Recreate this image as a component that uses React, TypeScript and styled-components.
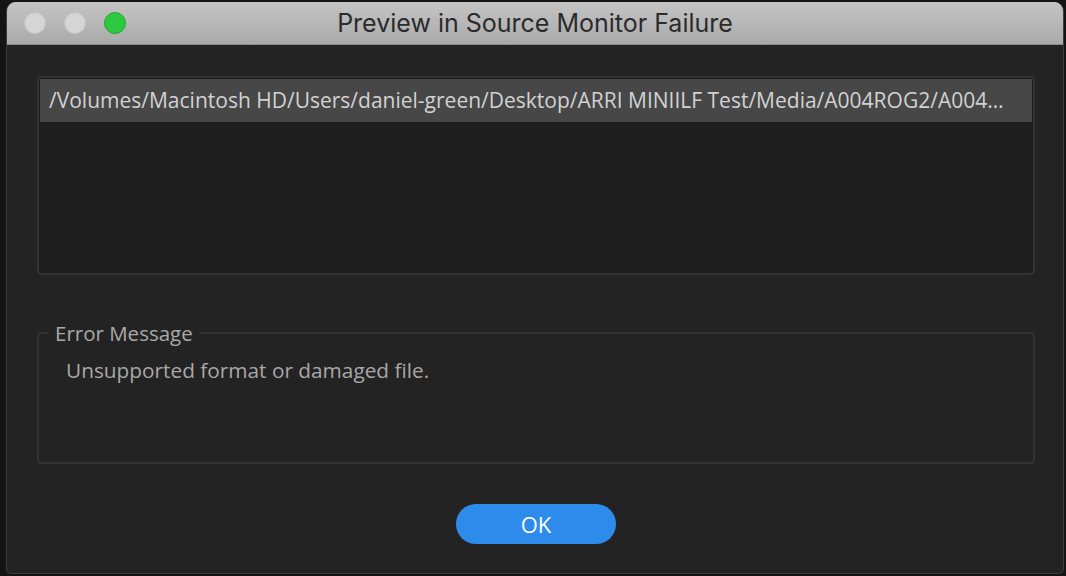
import styled, { createGlobalStyle } from "styled-components";

const Global = createGlobalStyle`
    html, body {
        margin: 0;
        padding: 0;
        background-color: #141414;
        width: 1066px;
        height: 576px;
        overflow: hidden;
    }
`

const Janela = styled.div`
    margin: 2px 0 0 6px;
    width: 1058px;
    height: 572px;
    box-sizing: border-box;
    border: 1px solid #3c3c3c;
    border-top: none;
    border-radius: 9px 9px 5px 5px;
    background-color: #232323;
    display: flex;
    flex-direction: column;
    overflow: hidden;
`

const BarraTitulo = styled.div`
    height: 43px;
    flex-shrink: 0;
    box-sizing: border-box;
    background: linear-gradient(#c4c4c4, #aaaaaa);
    border-bottom: 1px solid #8e8e8e;
    display: flex;
    align-items: center;
    position: relative;
`

const Semaforos = styled.div`
    display: flex;
    gap: 18px;
    padding-left: 17px;
`

const Luz = styled.span<{ cor: string; borda: string }>`
    width: 22px;
    height: 22px;
    box-sizing: border-box;
    border-radius: 50%;
    background-color: ${p => p.cor};
    border: 1px solid ${p => p.borda};
`

const Titulo = styled.div`
    position: absolute;
    left: 0;
    right: 0;
    text-align: center;
    font-family: Inter, "Liberation Sans", sans-serif;
    font-size: 25px;
    color: #2b2b2b;
    pointer-events: none;
`

const Corpo = styled.div`
    flex: 1;
    padding: 31px 28px 29px 30px;
    display: flex;
    flex-direction: column;
    font-family: "Open Sans", "Liberation Sans", sans-serif;
`

const Lista = styled.div`
    height: 199px;
    box-sizing: border-box;
    border: 2px solid #333333;
    border-radius: 4px;
    background-color: #1e1e1e;
    padding: 1px;
`

const Linha = styled.div`
    height: 43px;
    line-height: 43px;
    background-color: #474747;
    color: #d2d2d2;
    font-size: 21px;
    padding: 0 10px 0 9px;
    white-space: nowrap;
    overflow: hidden;
    text-overflow: ellipsis;
`

const Grupo = styled.fieldset`
    margin: 45px 0 0 0;
    padding: 0;
    border: 2px solid #333333;
    border-radius: 4px;
    min-width: 0;
`

const Legenda = styled.legend`
    margin-left: 10px;
    padding: 0 6px;
    font-size: 20.5px;
    line-height: 26px;
    color: #a9a9a9;
`

const Mensagem = styled.div`
    height: 116px;
    box-sizing: border-box;
    padding: 11px 27px 0;
    font-size: 20.8px;
    line-height: 26px;
    color: #a8a8a8;
`

const Rodape = styled.div`
    margin-top: 40px;
    display: flex;
    justify-content: center;
`

const Botao = styled.button`
    width: 160px;
    height: 40px;
    padding: 0 0 1px;
    border: none;
    border-radius: 20px;
    background-color: #2d8ceb;
    color: #ffffff;
    font-family: "Open Sans", "Liberation Sans", sans-serif;
    font-size: 22px;
    line-height: 38px;
    cursor: pointer;
`

export default function App() {
    return (
        <>
            <Global />
            <Janela>
                <BarraTitulo>
                    <Semaforos>
                        <Luz cor="#d5d5d5" borda="#c4c4c4" />
                        <Luz cor="#d5d5d5" borda="#c4c4c4" />
                        <Luz cor="#2cc840" borda="#22a832" />
                    </Semaforos>
                    <Titulo>Preview in Source Monitor Failure</Titulo>
                </BarraTitulo>
                <Corpo>
                    <Lista>
                        <Linha>/Volumes/Macintosh HD/Users/daniel-green/Desktop/ARRI MINIILF Test/Media/A004ROG2/A004…</Linha>
                    </Lista>
                    <Grupo>
                        <Legenda>Error Message</Legenda>
                        <Mensagem>Unsupported format or damaged file.</Mensagem>
                    </Grupo>
                    <Rodape>
                        <Botao>OK</Botao>
                    </Rodape>
                </Corpo>
            </Janela>
        </>
    )
}
